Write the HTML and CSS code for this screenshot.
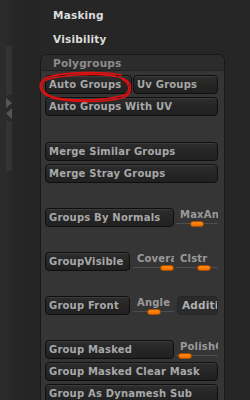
FILE: index.html
```html
<!DOCTYPE html>
<html>
<head>
<meta charset="utf-8">
<link rel="stylesheet" href="styles.css">
</head>
<body>
<div class="side">
  <div class="dots dots-top"></div>
  <div class="arrows">
    <svg width="8" height="22" viewBox="0 0 8 22"><polygon points="0,0 6,5 0,10" fill="#555"/><polygon points="6,10 0,15.5 6,21" fill="#555"/></svg>
  </div>
  <div class="dots dots-bottom"></div>
</div>
<div class="main">
  <div class="menu">
    <div class="menu-item">Masking</div>
    <div class="menu-item">Visibility</div>
  </div>
  <div class="panel">
    <div class="panel-head">Polygroups</div>
    <div class="panel-body">
      <div class="row">
        <div class="btn w87">Auto Groups</div>
        <div class="btn w85">Uv Groups</div>
      </div>
      <div class="row">
        <div class="btn full">Auto Groups With UV</div>
      </div>
      <div class="row sep first">
        <div class="btn full">Merge Similar Groups</div>
      </div>
      <div class="row">
        <div class="btn full">Merge Stray Groups</div>
      </div>
      <div class="row sep">
        <div class="btn w129">Groups By Normals</div>
        <div class="slider w42 ml2">
          <div class="slabel">MaxAngle</div>
          <div class="track"><div class="thumb" style="margin-left:14px"></div></div>
        </div>
      </div>
      <div class="row sep">
        <div class="btn w85">GroupVisible</div>
        <div class="slider w41 ml3">
          <div class="slabel">Coverage</div>
          <div class="track"><div class="thumb" style="margin-left:27px"></div></div>
        </div>
        <div class="slider w42 ml2">
          <div class="slabel">Clstr</div>
          <div class="track"><div class="thumb" style="margin-left:21px"></div></div>
        </div>
      </div>
      <div class="row sep">
        <div class="btn w85">Group Front</div>
        <div class="slider w41 ml3">
          <div class="slabel">Angle</div>
          <div class="track"><div class="thumb" style="margin-left:14px"></div></div>
        </div>
        <div class="btn flat w41 ml3">Additive</div>
      </div>
      <div class="row sep">
        <div class="btn w129">Group Masked</div>
        <div class="slider w42 ml2">
          <div class="slabel">PolishGroups</div>
          <div class="track"><div class="thumb" style="margin-left:2px"></div></div>
        </div>
      </div>
      <div class="row">
        <div class="btn full">Group Masked Clear Mask</div>
      </div>
      <div class="row">
        <div class="btn full">Group As Dynamesh Sub</div>
      </div>
    </div>
    <svg class="scribble" width="96" height="34" viewBox="0 0 96 34">
      <path d="M84 4 C62 0 26 1 10 6 C0 10 0 19 8 24 C22 32 66 32 84 27 C94 24 95 14 88 9 C80 4 60 3 44 3" fill="none" stroke="#e01010" stroke-width="1.6"/>
      <path d="M78 5 C56 2 22 4 8 9 C2 13 3 20 12 25 C28 31 68 30 86 24 C93 21 92 12 84 8" fill="none" stroke="#e01010" stroke-width="1.4"/>
    </svg>
  </div>
</div>
<div class="right"></div>
</body>
</html>
```
FILE: styles.css
```css
html, body {
  margin: 0;
  padding: 0;
}
body {
  width: 250px;
  height: 400px;
  overflow: hidden;
  background: #262626;
  display: flex;
  font-family: "DejaVu Sans", "Liberation Sans", sans-serif;
  font-weight: bold;
}
.side {
  width: 40px;
  flex: none;
  display: flex;
  flex-direction: column;
  padding-left: 6px;
  box-sizing: border-box;
  background: linear-gradient(to right, #2b2b2b 0, #2b2b2b 6px, #262626 14px, #242424 100%);
}
.dots {
  width: 6px;
  background-color: #2e2e2e;
  background-image: repeating-conic-gradient(#3a3a3a 0 25%, #2c2c2c 0 50%);
  background-size: 2px 2px;
}
.dots-top {
  margin-top: 46px;
  height: 49px;
}
.arrows {
  margin-top: 3px;
  height: 23px;
}
.arrows svg {
  display: block;
}
.dots-bottom {
  height: 50px;
}
.main {
  width: 185px;
  flex: none;
  display: flex;
  flex-direction: column;
}
.menu {
  height: 54px;
  padding-left: 13px;
  padding-top: 9px;
  box-sizing: border-box;
}
.menu-item {
  color: #dcdcdc;
  font-size: 10.5px;
  line-height: 12px;
  height: 24px;
  letter-spacing: 0.2px;
}
.panel {
  position: relative;
  flex: 1;
  border: 1px solid #181818;
  border-bottom: none;
  border-radius: 7px 7px 0 0;
  background: #353535;
}
.panel-head {
  background: #2c2c2c;
  border-radius: 6px 6px 0 0;
  border-bottom: 1px solid #222;
  color: #8c8c8c;
  font-size: 10.5px;
  line-height: 14px;
  padding-left: 12px;
  padding-top: 1px;
  box-sizing: border-box;
  height: 16px;
  letter-spacing: 0.2px;
}
.panel-body {
  display: flex;
  flex-direction: column;
  padding: 4px 6px 0 4px;
}
.row {
  display: flex;
  height: 19px;
  margin-top: 3px;
}
.row:first-child {
  margin-top: 0;
}
.row.sep {
  margin-top: 25px;
}
.row.sep.first {
  margin-top: 26px;
}
.btn {
  box-sizing: border-box;
  height: 19px;
  border: 1px solid #0e0e0e;
  border-radius: 4px;
  background: linear-gradient(#2d2d2d, #242424 60%, #212121);
  box-shadow: inset 0 1px 0 #3c3c3c;
  color: #a8a8a8;
  font-size: 10px;
  line-height: 17px;
  padding-left: 3px;
  letter-spacing: 0.2px;
  white-space: nowrap;
  overflow: hidden;
  flex: none;
}
.btn.flat {
  background: #2b2b2b;
  border-color: #262626;
  box-shadow: none;
  color: #b0b0b0;
  font-size: 10.5px;
  padding-left: 4px;
}
.full { width: 173px; }
.w87 { width: 87px; margin-right: 1px; }
.w85 { width: 85px; }
.w129 { width: 129px; }
.w42 { width: 42px; }
.w41 { width: 41px; }
.ml2 { margin-left: 2px; }
.ml3 { margin-left: 3px; }
.slider {
  flex: none;
  display: flex;
  flex-direction: column;
  height: 19px;
  overflow: hidden;
}
.slabel {
  color: #9a9a9a;
  font-size: 10px;
  line-height: 11px;
  padding-left: 4px;
  padding-top: 1px;
  height: 13px;
  box-sizing: border-box;
  white-space: nowrap;
  overflow: hidden;
  letter-spacing: 0.2px;
}
.track {
  height: 6px;
  display: flex;
  align-items: center;
  background: linear-gradient(to bottom, transparent 2px, #4e4e4e 2px, #4e4e4e 3px, transparent 3px);
}
.thumb {
  width: 14px;
  height: 6px;
  flex: none;
  box-sizing: border-box;
  border-radius: 3px;
  background: linear-gradient(#ff8a10, #ee7000);
  border: 1px solid #a84e00;
}
.scribble {
  position: absolute;
  left: -3px;
  top: 16px;
}
.right {
  flex: 1;
  background: #262626;
}
```
